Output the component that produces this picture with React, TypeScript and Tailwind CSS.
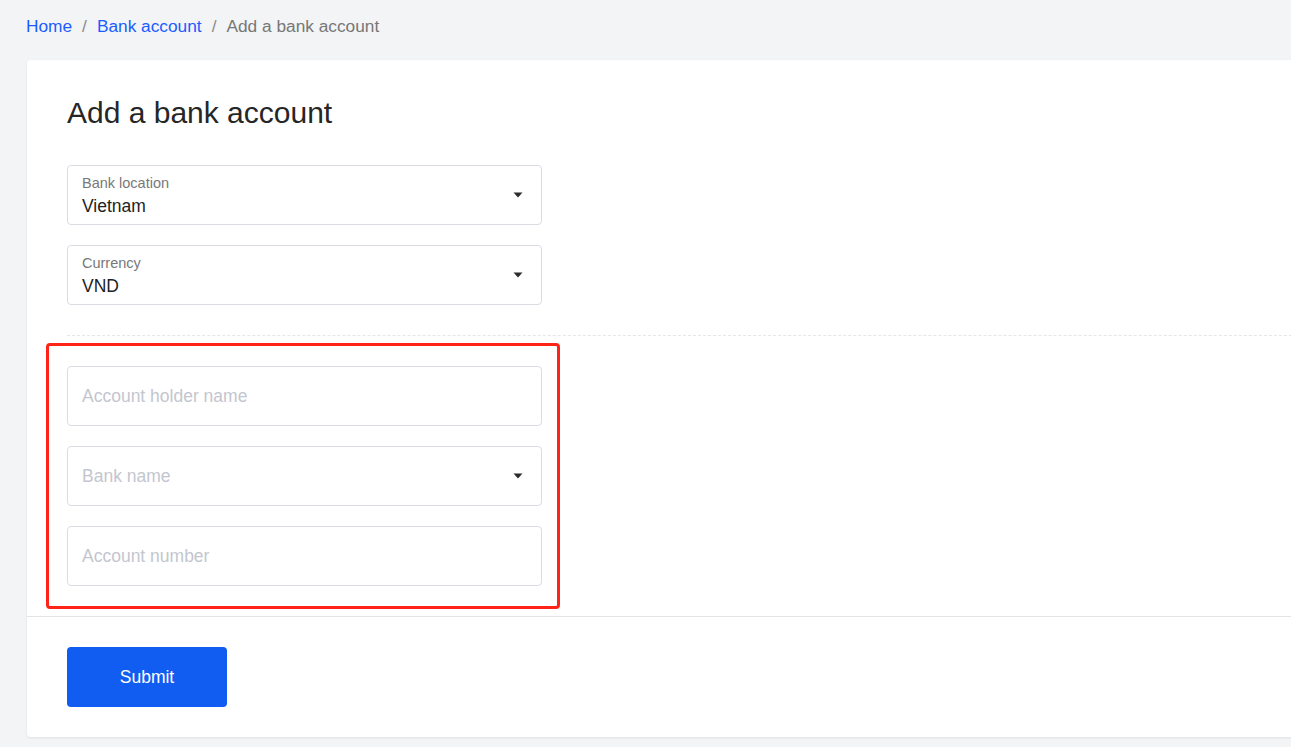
import React from "react";

function Caret() {
  return (
    <svg width="10" height="6" viewBox="0 0 10 6" className="shrink-0">
      <path d="M0.5 0.5 L9.5 0.5 L5 5.5 Z" fill="#2b2b2b" />
    </svg>
  );
}

function SelectField({ label, value }: { label: string; value: string }) {
  return (
    <div className="h-[60px] w-[475px] rounded-[4px] border border-[#d9dce3] bg-white pl-[14px] pr-[18px] flex items-center justify-between">
      <div className="flex flex-col pt-[3px]">
        <span className="text-[14.5px] leading-[17px] text-[#787878]">{label}</span>
        <span className="mt-[2px] text-[17.5px] leading-[25px] text-[#222]">{value}</span>
      </div>
      <Caret />
    </div>
  );
}

function PlaceholderField({ placeholder, caret }: { placeholder: string; caret?: boolean }) {
  return (
    <div className="h-[60px] w-[475px] rounded-[4px] border border-[#d9dce3] bg-white pl-[14px] pr-[18px] flex items-center justify-between">
      <span className="text-[17.5px] text-[#c3c6cf]">{placeholder}</span>
      {caret ? <Caret /> : null}
    </div>
  );
}

export default function App() {
  return (
    <div
      className="min-h-[747px] bg-[#f3f4f6] overflow-hidden"
      style={{ fontFamily: '"Liberation Sans", Arial, sans-serif' }}
    >
      <div className="pl-[26px] pt-[14px] h-[60px] text-[17.3px] leading-[24px] flex gap-[10px]">
        <span className="text-[#1a5cff]">Home</span>
        <span className="text-[#8a8a8a]">/</span>
        <span className="text-[#1a5cff]">Bank account</span>
        <span className="text-[#8a8a8a]">/</span>
        <span className="text-[#777]">Add a bank account</span>
      </div>
      <div className="ml-[27px] w-[1300px] rounded-[4px] bg-white shadow-[0_1px_3px_rgba(0,0,0,0.08)]">
        <div className="pl-[40px] pt-[33px]">
          <h1 className="text-[30px] leading-[40px] text-[#262626]">Add a bank account</h1>
          <div className="mt-[32px] flex flex-col gap-[20px]">
            <SelectField label="Bank location" value="Vietnam" />
            <SelectField label="Currency" value="VND" />
          </div>
          <div className="mt-[30px] border-t border-dashed border-[#e4e6ea]" />
          <div className="mt-[7px] ml-[-21px] w-[514px] rounded-[4px] border-[3px] border-[#ff2318] px-[18px] py-[20px] flex flex-col gap-[20px]">
            <PlaceholderField placeholder="Account holder name" />
            <PlaceholderField placeholder="Bank name" caret />
            <PlaceholderField placeholder="Account number" />
          </div>
        </div>
        <div className="mt-[7px] border-t border-[#e2e4e8]" />
        <div className="pl-[40px] pt-[30px] pb-[30px]">
          <button className="h-[60px] w-[160px] rounded-[4px] bg-[#115cf1] text-white text-[17.5px]">
            Submit
          </button>
        </div>
      </div>
    </div>
  );
}
